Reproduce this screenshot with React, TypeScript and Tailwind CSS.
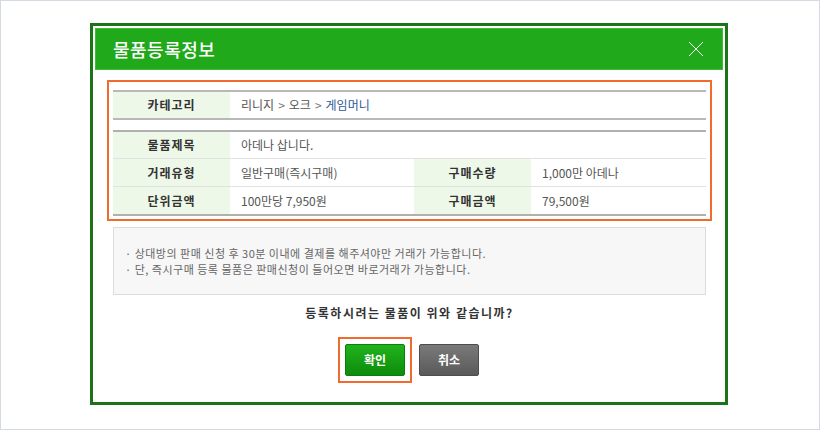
import React from 'react';

const font = { fontFamily: '"Noto Sans CJK KR", "Noto Sans", sans-serif' };

function Label({ children }: { children: React.ReactNode }) {
  return (
    <div className="w-[117px] shrink-0 bg-[#edf8e8] flex items-center justify-center text-[12px] font-bold text-[#333] tracking-[1px]">
      {children}
    </div>
  );
}

function Value({ children, className = '' }: { children: React.ReactNode; className?: string }) {
  return <div className={`flex items-center pl-[11px] text-[12px] text-[#555] ${className}`}>{children}</div>;
}

export default function App() {
  return (
    <div style={font} className="w-[820px] h-[430px] bg-white border border-[#d3dae1] pl-[89px] pt-[22px]">
      {/* Dialog */}
      <div className="w-[638px] h-[382px] border-[3px] border-[#1b7418] bg-white p-[2px] flex flex-col">
        {/* Header */}
        <div className="h-[42px] bg-[#20a91b] border border-[#3dbd35] flex items-center justify-between pl-[17px] pr-[18px]">
          <span className="text-white text-[18px] font-medium tracking-[0.5px]">물품등록정보</span>
          <svg width="16" height="16" viewBox="0 0 16 16" className="text-white">
            <path d="M1 1 L15 15 M15 1 L1 15" stroke="currentColor" strokeWidth="1" fill="none" />
          </svg>
        </div>

        {/* Body */}
        <div className="flex-1 flex flex-col pl-[18px] pr-[17px] pt-[10px]">
          {/* Highlighted info block */}
          <div className="-mx-[6px] border-2 border-[#f26a2c] px-[4px] pt-[8px] pb-[3px]">
            <div className="border-t-2 border-b-2 border-[#b8b8b8] h-[30px] flex">
              <Label>카테고리</Label>
              <Value className="gap-[4px] text-[#555]">
                리니지 <span className="text-[#777]">&gt;</span> 오크 <span className="text-[#777]">&gt;</span>
                <span className="text-[#2c5a96]">게임머니</span>
              </Value>
            </div>

            <div className="mt-[10px] border-t-2 border-b-2 border-[#b0b0b0]">
              <div className="h-[27px] flex border-b border-[#e1e1e1]">
                <Label>물품제목</Label>
                <Value>아데나 삽니다.</Value>
              </div>
              <div className="h-[28px] flex border-b border-[#e1e1e1]">
                <Label>거래유형</Label>
                <Value className="w-[184px] text-[11px]">일반구매(즉시구매)</Value>
                <Label>구매수량</Label>
                <Value className="text-[11px]">1,000만 아데나</Value>
              </div>
              <div className="h-[27px] flex">
                <Label>단위금액</Label>
                <Value className="w-[184px] text-[11px]">100만당 7,950원</Value>
                <Label>구매금액</Label>
                <Value className="text-[11px]">79,500원</Value>
              </div>
            </div>
          </div>

          {/* Notice */}
          <div className="mt-[6px] h-[68px] bg-[#f7f7f7] border border-[#dcdcdc] flex flex-col justify-center pl-[11px] leading-[16px] text-[11px] text-[#666] tracking-[0.5px]">
            <p>· 상대방의 판매 신청 후 30분 이내에 결제를 해주셔야만 거래가 가능합니다.</p>
            <p>· 단, 즉시구매 등록 물품은 판매신청이 들어오면 바로거래가 가능합니다.</p>
          </div>

          <p className="mt-[9px] text-center text-[12px] font-bold text-[#333] tracking-[1.5px]">
            등록하시려는 물품이 위와 같습니까?
          </p>

          {/* Buttons */}
          <div className="mt-[15px] flex justify-center items-center gap-[7px] pr-[2px]">
            <div className="border-2 border-[#f26a2c] p-[5px]">
              <button className="w-[60px] h-[32px] rounded-[2px] border border-[#0f7d0d] bg-gradient-to-b from-[#20b31c] to-[#0d8c0b] text-white text-[12px] font-bold">
                확인
              </button>
            </div>
            <button className="w-[60px] h-[32px] rounded-[2px] border border-[#4d4d4d] bg-gradient-to-b from-[#7a7a7a] to-[#5a5a5a] text-white text-[12px] font-bold">
              취소
            </button>
          </div>
        </div>
      </div>
    </div>
  );
}
